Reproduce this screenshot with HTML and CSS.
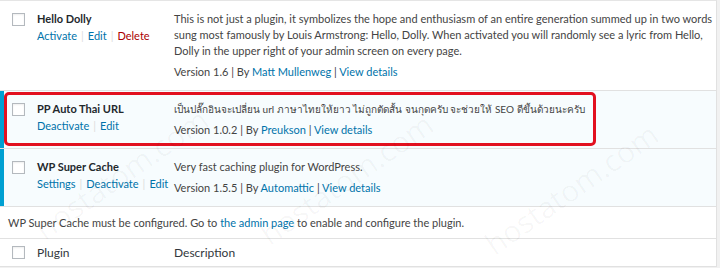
FILE: index.html
```html
<!DOCTYPE html>
<html lang="en">
<head>
    <meta charset="UTF-8">
    <title>Plugins</title>
    <link rel="stylesheet" href="styles.css">
</head>
<body>
    <div class="plugins">
        <div class="row inactive">
            <div class="col-check"><span class="checkbox"></span></div>
            <div class="col-name">
                <div class="title">Hello Dolly</div>
                <div class="actions"><a href="#">Activate</a><span class="sep">|</span><a href="#">Edit</a><span class="sep">|</span><a href="#" class="delete">Delete</a></div>
            </div>
            <div class="col-desc">
                <p>This is not just a plugin, it symbolizes the hope and enthusiasm of an entire generation summed up in two words sung most famously by Louis Armstrong: Hello, Dolly. When activated you will randomly see a lyric from Hello, Dolly in the upper right of your admin screen on every page.</p>
                <div class="version">Version 1.6 | By <a href="#">Matt Mullenweg</a> | <a href="#">View details</a></div>
            </div>
        </div>

        <div class="row active">
            <div class="col-check"><span class="checkbox"></span></div>
            <div class="col-name">
                <div class="title">PP Auto Thai URL</div>
                <div class="actions"><a href="#">Deactivate</a><span class="sep">|</span><a href="#">Edit</a></div>
            </div>
            <div class="col-desc">
                <p class="thai">เป็นปลั๊กอินจะเปลี่ยน url ภาษาไทยให้ยาว ไม่ถูกตัดสั้น จนกุดครับ จะช่วยให้ SEO ดีขึ้นด้วยนะครับ</p>
                <div class="version">Version 1.0.2 | By <a href="#">Preukson</a> | <a href="#">View details</a></div>
            </div>
            <div class="highlight"></div>
        </div>

        <div class="row active">
            <div class="col-check"><span class="checkbox"></span></div>
            <div class="col-name">
                <div class="title">WP Super Cache</div>
                <div class="actions"><a href="#">Settings</a><span class="sep">|</span><a href="#">Deactivate</a><span class="sep">|</span><a href="#">Edit</a></div>
            </div>
            <div class="col-desc">
                <p>Very fast caching plugin for WordPress.</p>
                <div class="version">Version 1.5.5 | By <a href="#">Automattic</a> | <a href="#">View details</a></div>
            </div>
        </div>

        <div class="notice">WP Super Cache must be configured. Go to <a href="#">the admin page</a> to enable and configure the plugin.</div>

        <div class="row foot">
            <div class="col-check"><span class="checkbox"></span></div>
            <div class="col-name">Plugin</div>
            <div class="col-desc">Description</div>
        </div>

        <!-- watermark -->
        <span class="mark" style="left: 245px; top: 170px;">hostatom.com</span>
        <span class="mark" style="left: 20px; top: 165px;">hostatom.com</span>
        <span class="mark" style="left: 470px; top: 180px;">hostatom.com</span>
    </div>
</body>
</html>
```
FILE: styles.css
```css
body {
    margin: 0;
    background-color: #f1f1f1;
    font-family: Lato, "Noto Sans", sans-serif;
    font-size: 11px;
    line-height: 16px;
    color: #444;
}
a {
    color: #0073aa;
    text-decoration: none;
}
p {
    margin: 0;
}
.plugins {
    position: relative;
    width: 716px;
    background: white;
    border-top: 1px solid #e5e5e5;
    border-right: 1px solid #e1e1e1;
    border-bottom: 1px solid #e1e1e1;
    overflow: hidden;
}
.row {
    position: relative;
    display: flex;
    padding: 10px 0;
    border-bottom: 1px solid #e1e1e1;
}
.row.active {
    background-color: #f7fcfe;
    box-shadow: inset 4px 0 0 #00a0d2;
}
.col-check {
    width: 25px;
    padding-left: 12px;
}
.col-name {
    width: 137px;
}
.col-desc {
    flex: 1;
}
.checkbox {
    display: block;
    width: 11px;
    height: 11px;
    margin-top: 2px;
    border: 1px solid #b4b9be;
    background: white;
    box-shadow: inset 0 1px 2px rgba(0,0,0,0.07);
}
.title {
    color: #23282d;
    font-weight: bold;
    font-size: 11px;
}
.actions {
    padding-top: 1px;
    color: #ddd;
}
.actions .sep {
    margin: 0 4px;
}
.actions .delete {
    color: #a00;
}
.version {
    margin-top: 5px;
}
.thai {
    font-size: 10px;
}
.notice {
    padding: 8px 8px 7px;
    border-bottom: 1px solid #e1e1e1;
    color: #444;
}
.row.foot {
    padding: 6px 0 5px;
    border-bottom: none;
    font-size: 12px;
    color: #32373c;
}
.row.foot .checkbox {
    margin-top: 1px;
}
.highlight {
    position: absolute;
    left: 4px;
    top: 1px;
    width: 586px;
    height: 48px;
    border: 3px solid #e2101f;
    border-radius: 5px;
}
.mark {
    position: absolute;
    font-family: "Open Sans", sans-serif;
    font-size: 30px;
    color: rgba(0, 0, 0, 0.035);
    transform: rotate(-35deg);
    white-space: nowrap;
    pointer-events: none;
}
```
